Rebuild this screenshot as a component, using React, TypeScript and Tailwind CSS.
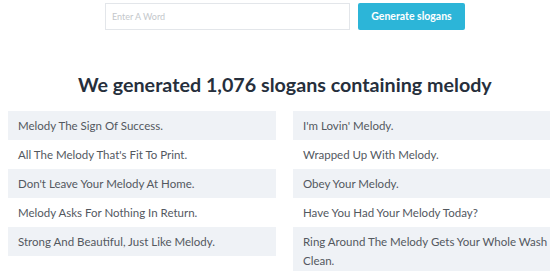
const left = [
  "Melody The Sign Of Success.",
  "All The Melody That's Fit To Print.",
  "Don't Leave Your Melody At Home.",
  "Melody Asks For Nothing In Return.",
  "Strong And Beautiful, Just Like Melody.",
];

const right = [
  "I'm Lovin' Melody.",
  "Wrapped Up With Melody.",
  "Obey Your Melody.",
  "Have You Had Your Melody Today?",
  "Ring Around The Melody Gets Your Whole Wash Clean.",
];

const SloganList = ({ items }: { items: string[] }) => (
  <ul className="flex w-[268px] shrink-0 flex-col">
    {items.map((s, i) => (
      <li
        key={s}
        className={`px-[10px] py-[5px] text-[11.5px] leading-[19px] text-[#53585f] ${
          i % 2 === 0 ? "bg-[#eff2f6]" : "bg-white"
        }`}
      >
        {s}
      </li>
    ))}
  </ul>
);

export default function App() {
  return (
    <div
      className="h-[271px] w-[550px] overflow-hidden bg-white"
      style={{ fontFamily: "Lato, 'Open Sans', sans-serif" }}
    >
      <div className="flex gap-2 pl-[105px] pt-[3px]">
        <div className="flex h-[27px] w-[245px] items-center border border-[#e3e6ea] px-[6px] text-[9px] text-[#c4c7cb]">
          Enter A Word
        </div>
        <button className="flex h-[27px] w-[107px] items-center justify-center rounded-[2px] bg-[#2cb5d8] text-[10.5px] font-bold text-white">
          Generate slogans
        </button>
      </div>

      <h2 className="mt-[43px] pl-[78px] text-[19.7px] font-bold leading-[24px] text-[#262f3c]">
        We generated 1,076 slogans containing melody
      </h2>

      <div className="mt-[14px] flex gap-[17px] pl-2">
        <SloganList items={left} />
        <SloganList items={right} />
      </div>
    </div>
  );
}
